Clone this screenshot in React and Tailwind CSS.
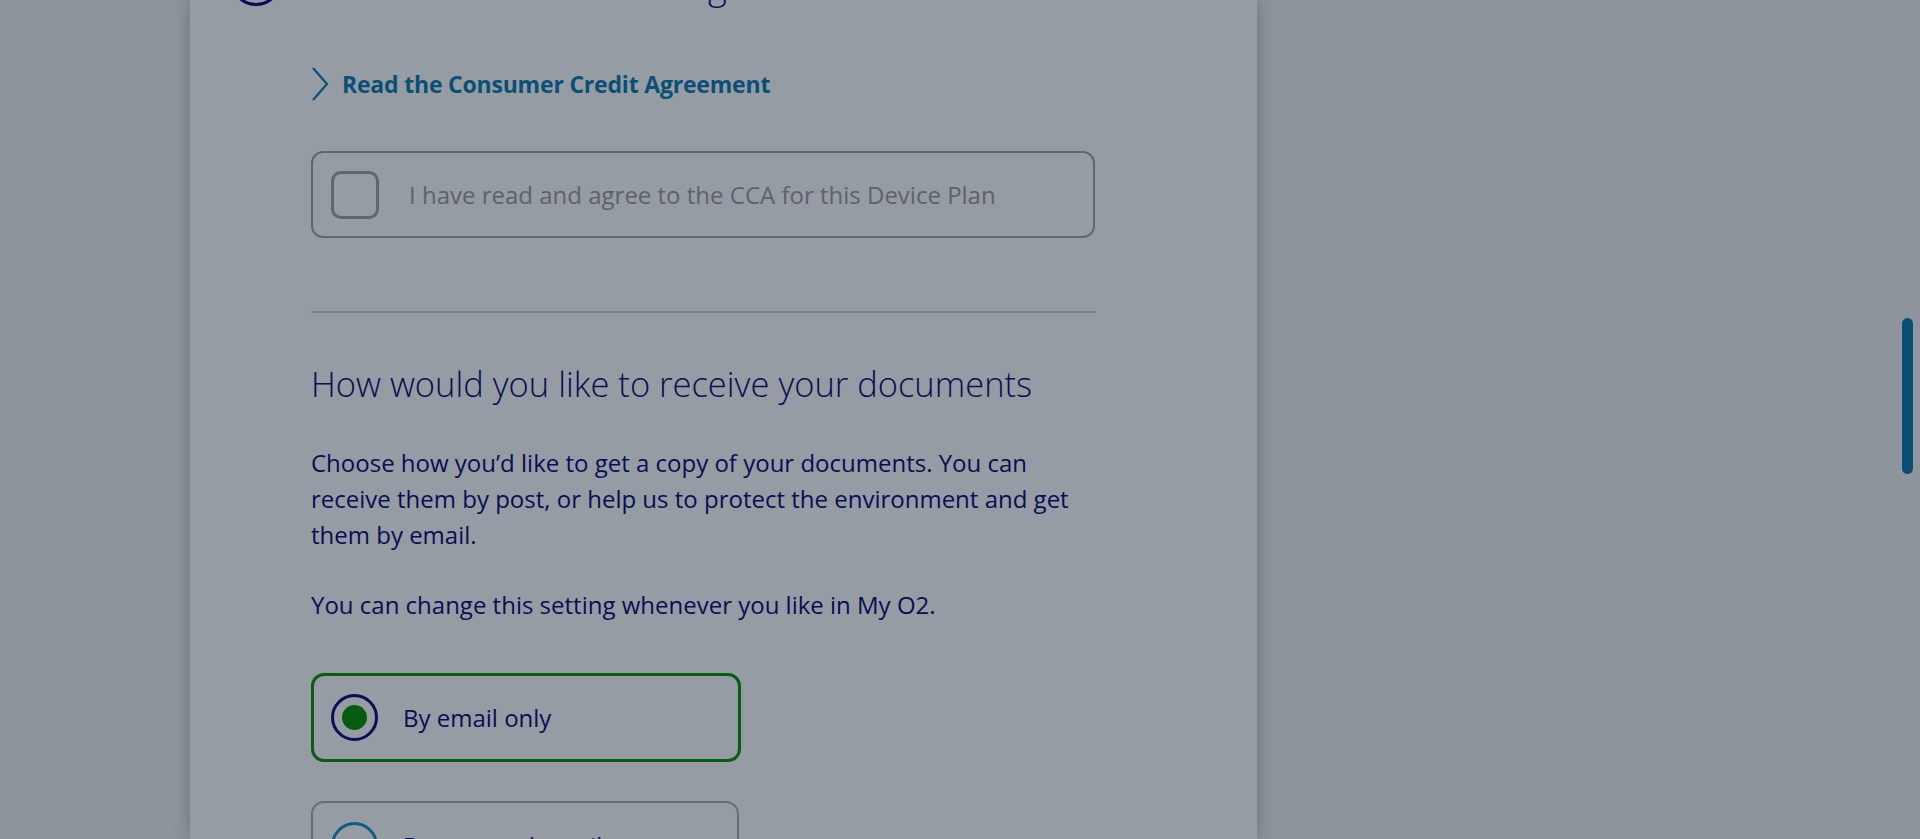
import React from "react";

export default function App() {
  return (
    <div
      className="relative h-[839px] w-[1920px] overflow-hidden bg-[#8e959d]"
      style={{ fontFamily: '"Open Sans", "Noto Sans", sans-serif' }}
    >
      <div className="ml-[190px] flex h-[839px] w-[1067px] flex-col bg-[#959ca4] shadow-[0_0_18px_rgba(40,45,55,0.35)]">
        {/* Heading row (scrolled, mostly off-screen) */}
        <div className="-mt-[48px] flex h-[56px] items-start">
          <div className="ml-[40px] mt-[2px] h-[52px] w-[52px] shrink-0 rounded-full border-[3px] border-[#0a0e54]" />
          <div className="ml-[35px] mt-[12px] whitespace-nowrap text-[36px] font-light leading-[44px] text-[#0a0e54]">
            Your Consumer Credit Agreement
          </div>
        </div>

        <div className="pl-[121px]">
          {/* Link */}
          <a className="mt-[59px] flex h-[34px] items-center gap-[13px] text-[23px] font-bold text-[#0b4f74]">
            <svg width="18" height="34" viewBox="0 0 18 34" fill="none">
              <path d="M2 1 L16 17 L2 33" stroke="#0b4f74" strokeWidth="2.2" />
            </svg>
            <span className="leading-none tracking-[-0.2px]">Read the Consumer Credit Agreement</span>
          </a>

          {/* Checkbox */}
          <div className="mt-[50px] flex h-[87px] w-[784px] items-center rounded-[12px] border-[2px] border-[#62676e] pl-[18px]">
            <div className="h-[48px] w-[48px] shrink-0 rounded-[10px] border-[3px] border-[#61666d]" />
            <span className="ml-[30px] whitespace-nowrap text-[24px] text-[#5d626a]">
              I have read and agree to the CCA for this Device Plan
            </span>
          </div>

          {/* Divider */}
          <div className="mt-[73px] h-[2px] w-[785px] bg-[#7b8289]" />

          {/* Section heading */}
          <h2 className="mt-[51px] whitespace-nowrap text-[34.5px] font-light leading-[40px] text-[#0a0e54]">
            How would you like to receive your documents
          </h2>

          <div className="mt-[41px] w-[785px] text-[24px] leading-[36px] text-[#0a0e54]">
            <p>
              Choose how you’d like to get a copy of your documents. You can
              receive them by post, or help us to protect the environment and get
              them by email.
            </p>
            <p className="mt-[34px]">You can change this setting whenever you like in My O2.</p>
          </div>

          {/* Radio options */}
          <div className="mt-[50px] flex h-[89px] w-[430px] items-center rounded-[13px] border-[3px] border-[#0a5c14] pl-[17px]">
            <div className="flex h-[47px] w-[47px] shrink-0 items-center justify-center rounded-full border-[3px] border-[#0a0e54]">
              <div className="h-[25px] w-[25px] rounded-full bg-[#075a10]" />
            </div>
            <span className="ml-[25px] text-[24px] text-[#0a0e54]">By email only</span>
          </div>

          <div className="mt-[39px] flex h-[89px] w-[428px] items-center rounded-[13px] border-[2px] border-[#686d74] pl-[18px]">
            <div className="h-[47px] w-[47px] shrink-0 rounded-full border-[3px] border-[#0b5f80]" />
            <span className="ml-[25px] text-[24px] text-[#0a0e54]">By post and email</span>
          </div>
        </div>
      </div>

      {/* Scrollbar thumb */}
      <div className="absolute left-[1902px] top-[318px] h-[156px] w-[11px] rounded-full bg-[#0b4f74]" />
    </div>
  );
}
